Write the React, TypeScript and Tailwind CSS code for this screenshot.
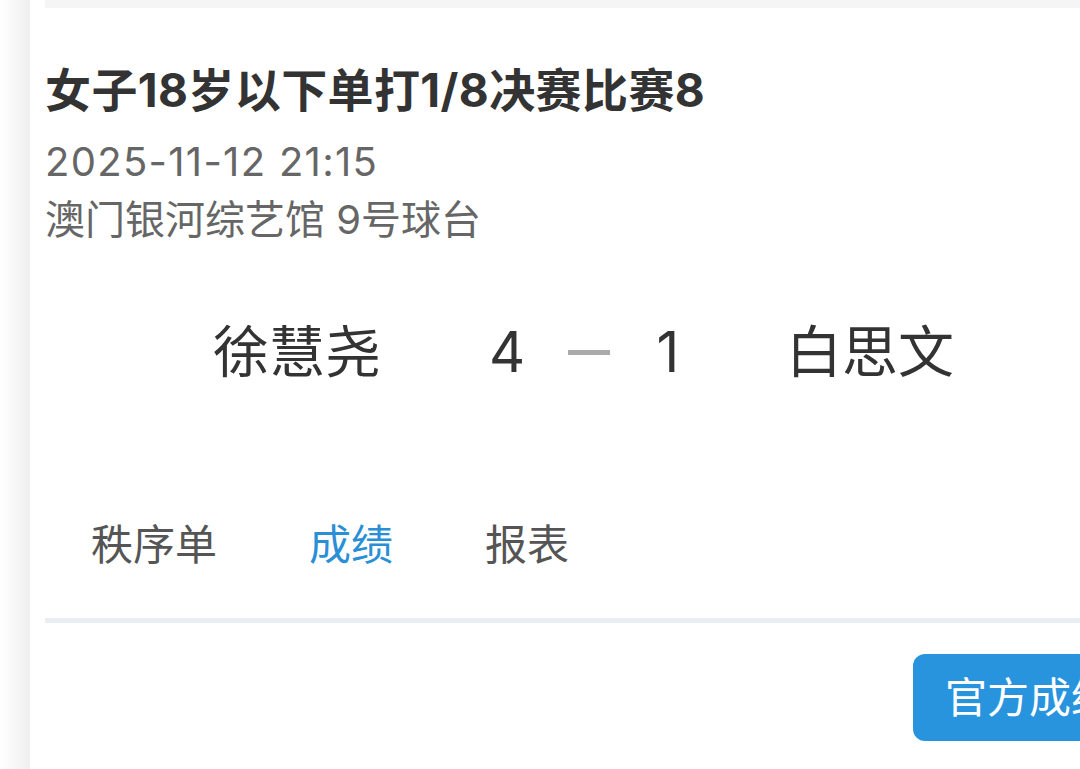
import React from 'react';

const font = { fontFamily: 'Inter, "Noto Sans CJK SC", sans-serif' };

const tabs = [
    { label: '秩序单', active: false },
    { label: '成绩', active: true },
    { label: '报表', active: false },
];

export default function App() {
    return (
        <div className="flex h-[769px] w-[1080px] overflow-hidden bg-white" style={font}>
            {/* left edge shadow */}
            <div className="w-[30px] shrink-0 bg-linear-to-r from-white to-[#efefef]" />

            <div className="flex w-[1130px] shrink-0 flex-col px-[15px]">
                <div className="h-[8px] bg-[#f5f5f5]" />

                <div className="mt-[53px] text-[46px] font-bold leading-[58px] tracking-[0.4px] text-[#333333]">
                    女子18岁以下单打1/8决赛比赛8
                </div>
                <div className="mt-[14px] text-[40px] leading-[58px] tracking-[1.3px] text-[#666666]">2025-11-12 21:15</div>
                <div className="text-[40px] leading-[58px] text-[#666666]">澳门银河综艺馆 9号球台</div>

                <div className="mt-[63px] ml-[142px] flex h-[80px] items-center text-[56px] text-[#333333]">
                    <div className="w-[220px] text-center">徐慧尧</div>
                    <div className="ml-[82px] w-[34px] text-center">4</div>
                    <div className="ml-[45px] h-[5px] w-[42px] bg-[#aaaaaa]" />
                    <div className="ml-[41px] w-[34px] text-center">1</div>
                    <div className="ml-[75px] w-[220px] text-center">白思文</div>
                </div>

                <div className="mt-[123px] ml-[46px] flex gap-[92px] text-[42px] leading-[60px]">
                    {tabs.map((t) => (
                        <div key={t.label} className={t.active ? 'text-[#2b8fd6]' : 'text-[#555555]'}>
                            {t.label}
                        </div>
                    ))}
                </div>

                <div className="mt-[43px] h-[5px] bg-[#e9eef5]" />

                <div className="mt-[31px] flex justify-end">
                    <button className="h-[87px] rounded-[12px] bg-[#2994de] px-[32px] text-[42px] text-white">
                        官方成绩
                    </button>
                </div>
            </div>
        </div>
    );
}
